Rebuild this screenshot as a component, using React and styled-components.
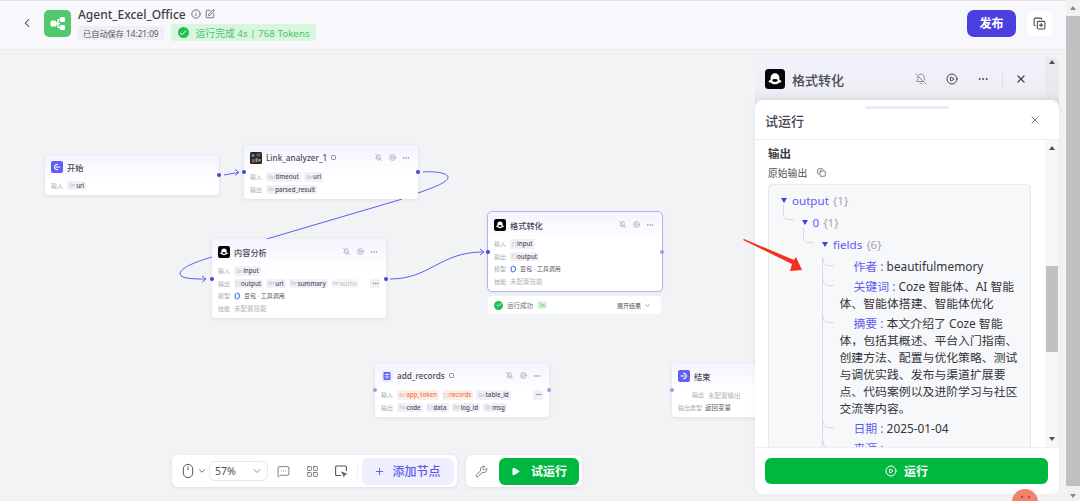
import React from "react";
import styled, { createGlobalStyle } from "styled-components";
import {
  ChevronLeft,
  ChevronDown,
  Info,
  SquarePen,
  CopyPlus,
  Copy,
  Mouse,
  MessageSquareMore,
  LayoutGrid,
  Wrench,
  Plus,
  Play,
  CirclePlay,
  Ellipsis,
  X,
  BellOff,
  Check
} from "lucide-react";

const FONT = `"Noto Sans", "Noto Sans CJK SC", sans-serif`;

const NODES = [
  {
    id: "start",
    x: 45,
    y: 105,
    icon: "start",
    title: "开始",
    plain: true,
    compact: true,
    rows: [{ label: "输入", tags: [{ type: "Str", name: "url" }] }],
    ports: [{ side: "right", top: 20 }]
  },
  {
    id: "link",
    x: 244,
    y: 95,
    icon: "link",
    title: "Link_analyzer_1",
    badge: true,
    rows: [
      {
        label: "输入",
        tags: [
          { type: "Nu", name: "timeout" },
          { type: "Str", name: "url" }
        ]
      },
      { label: "输出", tags: [{ type: "Str", name: "parsed_result" }] }
    ],
    ports: [
      { side: "left", top: 27 },
      { side: "right", top: 27 }
    ]
  },
  {
    id: "analysis",
    x: 212,
    y: 189,
    icon: "bot",
    title: "内容分析",
    rows: [
      { label: "输入", tags: [{ type: "Str", name: "input" }] },
      {
        label: "输出",
        tags: [
          { type: "[ ]", name: "output" },
          { type: "Str", name: "url" },
          { type: "Str", name: "summary" },
          { type: "Str", name: "autho", tone: "faded" }
        ],
        more: true
      },
      { label: "模型", model: "豆包 · 工具调用" },
      { label: "技能", note: "未配置技能" }
    ],
    ports: [
      { side: "left", top: 40 },
      { side: "right", top: 40 }
    ]
  },
  {
    id: "format",
    x: 488,
    y: 162,
    icon: "bot",
    title: "格式转化",
    selected: true,
    rows: [
      { label: "输入", tags: [{ type: "[ ]", name: "input" }] },
      { label: "输出", tags: [{ type: "[ ]", name: "output" }] },
      { label: "模型", model: "豆包 · 工具调用" },
      { label: "技能", note: "未配置技能" }
    ],
    ports: [
      { side: "left", top: 40 },
      { side: "right", top: 40, dim: true }
    ]
  },
  {
    id: "records",
    x: 375,
    y: 313,
    icon: "table",
    title: "add_records",
    badge: true,
    rows: [
      {
        label: "输入",
        tags: [
          { type: "Str", name: "app_token", tone: "warn" },
          { type: "[ ]", name: "records", tone: "warn" },
          { type: "Str", name: "table_id" }
        ],
        more: true
      },
      {
        label: "输出",
        tags: [
          { type: "Nu", name: "code" },
          { type: "{ }", name: "data" },
          { type: "Str", name: "log_id" },
          { type: "Str", name: "msg" }
        ]
      }
    ],
    ports: [
      { side: "left", top: 27, dim: true },
      { side: "right", top: 27, dim: true }
    ]
  },
  {
    id: "end",
    x: 672,
    y: 313,
    icon: "end",
    title: "结束",
    plain: true,
    rows: [
      { label: "输出", note: "未配置输出", indent: true },
      { label: "输出类型", note: "返回变量", strong: true }
    ],
    ports: [{ side: "left", top: 27, dim: true }]
  }
];

const FIELDS = [
  { key: "作者", value: "beautifulmemory" },
  { key: "关键词", value: "Coze 智能体、AI 智能体、智能体搭建、智能体优化" },
  {
    key: "摘要",
    value:
      "本文介绍了 Coze 智能体，包括其概述、平台入门指南、创建方法、配置与优化策略、测试与调优实践、发布与渠道扩展要点、代码案例以及进阶学习与社区交流等内容。"
  },
  { key: "日期", value: "2025-01-04" },
  { key: "来源", value: "" }
];

function AppLogo() {
  return (
    <svg width="27" height="27" viewBox="0 0 27 27">
      <rect width="27" height="27" rx="5" fill="#4fc96c" />
      <path d="M11 13.5h5M14 9.5v8M14 9.5h3M14 17.5h3" stroke="#fff" strokeWidth="1.4" fill="none" />
      <rect x="6.5" y="10.5" width="6" height="6" rx="1.5" fill="#fff" />
      <rect x="16" y="7" width="5" height="5" rx="1.2" fill="#fff" />
      <rect x="16" y="15" width="5" height="5" rx="1.2" fill="#fff" />
    </svg>
  );
}

function NodeIcon({ kind, size = 12 }) {
  if (kind === "start") {
    return (
      <svg width={size} height={size} viewBox="0 0 12 12">
        <rect width="12" height="12" rx="2" fill="#5f5ff2" />
        <path d="M7 3.4A2.7 2.7 0 1 0 7 8.6" stroke="#fff" strokeWidth="1.1" fill="none" />
        <path d="M4.6 6h4.6" stroke="#fff" strokeWidth="1.1" />
      </svg>
    );
  }
  if (kind === "end") {
    return (
      <svg width={size} height={size} viewBox="0 0 12 12">
        <rect width="12" height="12" rx="2" fill="#5f5ff2" />
        <path d="M5 3.4A2.7 2.7 0 1 1 5 8.6" stroke="#fff" strokeWidth="1.1" fill="none" />
        <path d="M2.6 6h4.8" stroke="#fff" strokeWidth="1.1" />
      </svg>
    );
  }
  if (kind === "link") {
    return (
      <svg width={size} height={size} viewBox="0 0 12 12">
        <rect width="12" height="12" rx="1.5" fill="#23292b" />
        <rect x="1.5" y="2" width="3" height="3" fill="#4a8a72" />
        <rect x="6.5" y="1.5" width="4" height="3" fill="#56606a" />
        <rect x="2" y="7" width="2.5" height="3.5" fill="#c9503f" />
        <rect x="5.5" y="6" width="2" height="4" fill="#63b96f" />
        <rect x="8.5" y="7" width="2" height="2.5" fill="#c7a23e" />
      </svg>
    );
  }
  if (kind === "table") {
    return (
      <svg width={size} height={size} viewBox="0 0 12 12">
        <rect width="12" height="12" rx="2" fill="#eeeefb" />
        <rect x="2.5" y="2" width="7" height="8" rx="0.8" fill="#5f5ff2" />
        <path d="M3.5 4.5h5M3.5 7h5M6 3v6" stroke="#fff" strokeWidth="0.7" />
      </svg>
    );
  }
  return (
    <svg width={size} height={size} viewBox="0 0 20 20">
      <rect width="20" height="20" rx="3.5" fill="#060606" />
      <path d="M5.6 11V8.6a4.4 4.4 0 0 1 8.8 0V11c1.2.2 2 .8 2 1.5 0 .7-.9 1.1-2 1-1 1.1-2.5 1.8-4.4 1.8s-3.4-.7-4.4-1.8c-1.1.1-2-.3-2-1 0-.7.8-1.3 2-1.5z" fill="#fff" />
      <ellipse cx="10" cy="11.5" rx="2.8" ry="1.4" fill="#060606" />
    </svg>
  );
}

function DoubaoIcon() {
  return (
    <svg width="7" height="8" viewBox="0 0 7 8" fill="none">
      <path d="M3 1.2A2.8 2.8 0 1 1 1.6 6.500" stroke="#4f7cf2" strokeWidth="1.2" />
      <path d="M1.300 6.600V2" stroke="#4f7cf2" strokeWidth="1.2" />
      <path d="M1.300 2L3 1.200" stroke="#3fc6a8" strokeWidth="1.2" />
    </svg>
  );
}

function NoteIcon() {
  return (
    <svg width="14" height="14" viewBox="0 0 14 14" fill="none" stroke="#55565f" strokeWidth="1.1">
      <path d="M7 11.5H2.600a1 1 0 0 1-1-1V3a1 1 0 0 1 1-1h8.800a1 1 0 0 1 1 1v4" />
      <path d="M8.200 8.200l1.700 3.800.6-1.500 1.600-.6z" />
    </svg>
  );
}

function FlowNode({ node }) {
  return (
    <NodeCard $x={node.x} $y={node.y} $selected={node.selected}>
      <NodeHead $compact={node.compact}>
        <NodeIcon kind={node.icon} />
        <NodeTitle>{node.title}</NodeTitle>
        {node.badge && <TitleBadge />}
        {!node.plain && (
          <NodeActions>
            <BellOff size={7} />
            <CirclePlay size={7} />
            <Ellipsis size={8} />
          </NodeActions>
        )}
      </NodeHead>
      {node.rows.map(row => (
        <NodeRow key={row.label}>
          <RowLabel $indent={row.indent}>{row.label}</RowLabel>
          {row.tags &&
            row.tags.map(tag => (
              <Tag key={tag.name} $tone={tag.tone}>
                <TagType>{tag.type}</TagType>
                {tag.name}
              </Tag>
            ))}
          {row.model && (
            <ModelName>
              <DoubaoIcon />
              {row.model}
            </ModelName>
          )}
          {row.note && <RowNote $strong={row.strong}>{row.note}</RowNote>}
          {row.more && (
            <MoreTag>
              <Ellipsis size={7} />
            </MoreTag>
          )}
        </NodeRow>
      ))}
      {node.ports.map(port => (
        <Port key={port.side} $side={port.side} $top={port.top} $dim={port.dim} />
      ))}
    </NodeCard>
  );
}

function Wires() {
  return (
    <WireLayer viewBox="0 50 1066 451" fill="none" stroke="#5e5cf0" strokeWidth="1">
      <path d="M224 175L238 172.500" />
      <path d="M235 169.500L239 172.300L235 175.500" />
      <path d="M423 172C434 171 448 173 448 177C448 184 425 190 399 200L270 238C250 245 228 251 212 257C195 262 180 268 180 274C181 279 195 279 205 279" />
      <path d="M202 276L206 279L202 282" />
      <path d="M390 279C430 279 440 252 483 252" />
      <path d="M480 249L484 252L480 255" />
    </WireLayer>
  );
}

export default function App() {
  return (
    <Page>
      <GlobalStyle />
      <Main>
        <Header>
          <BackButton>
            <ChevronLeft size={14} strokeWidth={1.8} />
          </BackButton>
          <AppLogo />
          <TitleBlock>
            <TitleRow>
              <AppTitle>Agent_Excel_Office</AppTitle>
              <Info size={10} />
              <SquarePen size={10} />
            </TitleRow>
            <StatusRow>
              <SaveTag>已自动保存 14:21:09</SaveTag>
              <RunTag>
                <GreenCheck $size={11}>
                  <Check size={8} strokeWidth={3} />
                </GreenCheck>
                运行完成 4s | 768 Tokens
              </RunTag>
            </StatusRow>
          </TitleBlock>
          <HeaderRight>
            <PublishButton>发布</PublishButton>
            <IconTile>
              <CopyPlus size={13} />
            </IconTile>
          </HeaderRight>
        </Header>

        <Canvas>
          <Wires />
          {NODES.map(node => (
            <FlowNode key={node.id} node={node} />
          ))}

          <RunResult>
            <GreenCheck $size={9}>
              <Check size={6} strokeWidth={3.5} />
            </GreenCheck>
            <span>运行成功</span>
            <TimeTag>3s</TimeTag>
            <ExpandLink>
              展开结果 <ChevronDown size={7} />
            </ExpandLink>
          </RunResult>

          <ToolDock>
            <ToolBar>
              <MouseGroup>
                <Mouse size={16} strokeWidth={1.4} />
                <ChevronDown size={10} />
              </MouseGroup>
              <ZoomSelect>
                57%
                <ChevronDown size={12} strokeWidth={1.2} />
              </ZoomSelect>
              <ToolIcon>
                <MessageSquareMore size={13} strokeWidth={1.3} />
              </ToolIcon>
              <ToolIcon>
                <LayoutGrid size={13} strokeWidth={1.3} />
              </ToolIcon>
              <ToolIcon>
                <NoteIcon />
              </ToolIcon>
              <ToolDivider />
              <AddNode>
                <Plus size={11} />
                添加节点
              </AddNode>
            </ToolBar>
            <ToolBar $run>
              <ToolIcon>
                <Wrench size={13} strokeWidth={1.3} />
              </ToolIcon>
              <TryRun>
                <Play size={9} fill="#fff" />
                试运行
              </TryRun>
            </ToolBar>
          </ToolDock>

          <BackPanel>
            <NodeIcon kind="bot" size={20} />
            <BackTitle>格式转化</BackTitle>
            <BackActions>
              <BellOff size={12} color="#8b8c96" />
              <CirclePlay size={12} />
              <Ellipsis size={12} />
              <BackDivider />
              <X size={12} strokeWidth={2.4} />
            </BackActions>
            <BackScroll>
              <ScrollArrow $up />
            </BackScroll>
          </BackPanel>

          <TestPanel>
            <Handle />
            <TestHead>
              试运行
              <X size={12} strokeWidth={1.5} />
            </TestHead>
            <TestBody>
              <ResultScroll>
                <SectionTitle>输出</SectionTitle>
                <RawLabel>
                  原始输出
                  <Copy size={9} />
                </RawLabel>
                <JsonBox>
                  <TreeRow $level={0}>
                    <Caret />
                    output <Count>{"{1}"}</Count>
                  </TreeRow>
                  <TreeRow $level={1} $elbow>
                    <Caret />0 <Count>{"{1}"}</Count>
                  </TreeRow>
                  <TreeRow $level={2} $elbow>
                    <Caret />
                    fields <Count>{"{6}"}</Count>
                  </TreeRow>
                  <FieldList>
                    {FIELDS.map(field => (
                      <Field key={field.key}>
                        <FieldKey>{field.key} : </FieldKey>
                        {field.value}
                      </Field>
                    ))}
                  </FieldList>
                </JsonBox>
              </ResultScroll>
              <InnerScroll>
                <ScrollArrow $up />
                <InnerThumb />
                <ScrollArrow />
              </InnerScroll>
            </TestBody>
            <TestFoot>
              <RunButton>
                <CirclePlay size={12} />
                运行
              </RunButton>
            </TestFoot>
          </TestPanel>

          <Avatar>
            <AvatarEye />
            <AvatarEye />
          </Avatar>

          <PointerArrow viewBox="0 50 1066 451">
            <polygon points="743,240 744,239 794,260 796,257 802,270 790,271 792,264" fill="#f5301c" />
          </PointerArrow>
        </Canvas>
      </Main>
      <PageScroll>
        <ScrollArrow $up $page />
        <PageThumb />
        <ScrollArrow $page />
      </PageScroll>
    </Page>
  );
}

const GlobalStyle = createGlobalStyle`
  html, body {
    margin: 0;
    padding: 0;
    overflow: hidden;
    background: #f2f3f5;
    font-family: ${FONT};
  }
  * {
    box-sizing: border-box;
  }
`;

const Page = styled.div`
  display: flex;
  width: 1080px;
  height: 501px;
  overflow: hidden;
`;

const Main = styled.div`
  flex: 1;
  min-width: 0;
  display: flex;
  flex-direction: column;
`;

const Header = styled.header`
  flex: none;
  height: 50px;
  display: flex;
  align-items: center;
  padding: 0 14px 4px 20px;
  background: #f7f7fc;
  border-top: 1px solid #e3e3e6;
  border-bottom: 1px solid #ebecf0;
  color: #3f4049;
`;

const BackButton = styled.div`
  width: 24px;
  display: flex;
  color: #3f4049;
`;

const TitleBlock = styled.div`
  margin-left: 7px;
  display: flex;
  flex-direction: column;
  gap: 1px;
`;

const TitleRow = styled.div`
  display: flex;
  align-items: center;
  gap: 4px;
  height: 18px;
  color: #55565f;
`;

const AppTitle = styled.div`
  font-size: 12px;
  font-weight: 500;
  color: #3e3f48;
  margin-right: 1px;
`;

const StatusRow = styled.div`
  display: flex;
  align-items: center;
  gap: 7px;
`;

const SaveTag = styled.div`
  height: 14px;
  padding: 0 5px;
  display: flex;
  align-items: center;
  border-radius: 3px;
  background: #eeeff6;
  font-size: 8.2px;
  color: #55565f;
`;

const RunTag = styled.div`
  height: 17px;
  padding: 0 6px 0 7px;
  display: flex;
  align-items: center;
  gap: 7px;
  border-radius: 4px;
  background: #d8f5de;
  font-size: 9.8px;
  color: #4bc56a;
  white-space: nowrap;
`;

const GreenCheck = styled.span`
  flex: none;
  width: ${p => p.$size}px;
  height: ${p => p.$size}px;
  display: flex;
  align-items: center;
  justify-content: center;
  border-radius: 50%;
  background: #22bf55;
  color: #fff;
`;

const HeaderRight = styled.div`
  margin-left: auto;
  display: flex;
  align-items: center;
  gap: 11px;
`;

const PublishButton = styled.div`
  width: 49px;
  height: 27px;
  display: flex;
  align-items: center;
  justify-content: center;
  border-radius: 7px;
  background: #4a40e2;
  color: #fff;
  font-size: 12px;
  font-weight: 700;
`;

const IconTile = styled.div`
  width: 25px;
  height: 25px;
  display: flex;
  align-items: center;
  justify-content: center;
  border-radius: 6px;
  background: #fff;
  color: #4a4b54;
`;

const Canvas = styled.main`
  position: relative;
  flex: 1;
  background-color: #f2f3f5;
  background-image: radial-gradient(#e6e7ec 0.6px, transparent 0.7px);
  background-size: 10px 10px;
`;

const WireLayer = styled.svg`
  position: absolute;
  inset: 0;
  width: 1066px;
  height: 451px;
`;

const NodeCard = styled.div`
  position: absolute;
  left: ${p => p.$x}px;
  top: ${p => p.$y}px;
  width: 174px;
  padding: 0 6px 3px;
  border-radius: 4px;
  background: linear-gradient(180deg, #f4f3ff 0, #fff 28px);
  box-shadow: 0 1px 4px rgba(40, 45, 80, 0.1);
  outline: ${p => (p.$selected ? "1px solid #b2b4f6" : "none")};
`;

const NodeHead = styled.div`
  height: ${p => (p.$compact ? "24px" : "25.5px")};
  display: flex;
  align-items: center;
  gap: 4px;
`;

const NodeTitle = styled.div`
  font-size: 8.2px;
  font-weight: 500;
  color: #4a4b54;
`;

const TitleBadge = styled.span`
  width: 5px;
  height: 5px;
  border: 0.8px solid #85868f;
  border-radius: 1.5px;
`;

const NodeActions = styled.div`
  margin-left: auto;
  display: flex;
  align-items: center;
  gap: 6.5px;
  padding-right: 2px;
  color: #8c8d96;
`;

const NodeRow = styled.div`
  height: 12.5px;
  display: flex;
  align-items: center;
  gap: 3px;
  white-space: nowrap;
  overflow: hidden;
`;

const RowLabel = styled.div`
  flex: none;
  min-width: 13px;
  margin-left: ${p => (p.$indent ? "14px" : "0")};
  font-size: 6px;
  color: #a9aab2;
`;

const Tag = styled.div`
  flex: none;
  height: 9.5px;
  padding: 0 2px;
  display: flex;
  align-items: center;
  gap: 0.5px;
  border-radius: 2px;
  font-size: 6.2px;
  font-weight: 500;
  background: ${p => (p.$tone === "warn" ? "#fdeee7" : p.$tone === "faded" ? "#f8f8fb" : "#f0f1f7")};
  color: ${p => (p.$tone === "warn" ? "#f0744a" : p.$tone === "faded" ? "#c4c5cc" : "#4c4d58")};
`;

const TagType = styled.span`
  font-size: 5px;
  font-weight: 400;
  color: #b9bac2;
`;

const ModelName = styled.div`
  display: flex;
  align-items: center;
  gap: 3px;
  font-size: 6px;
  color: #55565f;
`;

const RowNote = styled.div`
  font-size: 6.5px;
  color: ${p => (p.$strong ? "#55565f" : "#b4b5bc")};
`;

const MoreTag = styled.div`
  flex: none;
  margin-left: auto;
  width: 10px;
  height: 9.5px;
  display: flex;
  align-items: center;
  justify-content: center;
  border-radius: 2px;
  background: #f0f1f7;
  color: #6a6b75;
`;

const Port = styled.span`
  position: absolute;
  top: ${p => p.$top - 2}px;
  ${p => p.$side}: -2px;
  width: 4px;
  height: 4px;
  border-radius: 50%;
  background: ${p => (p.$dim ? "#9a9cf2" : "#4340ea")};
`;

const RunResult = styled.div`
  position: absolute;
  left: 488px;
  top: 246px;
  width: 173px;
  height: 18px;
  padding: 0 6px;
  display: flex;
  align-items: center;
  gap: 4px;
  border-radius: 4px;
  background: #fff;
  font-size: 6.5px;
  color: #6a6b75;
`;

const TimeTag = styled.span`
  padding: 0 2px;
  border-radius: 2px;
  background: #dcf6e2;
  color: #52bf6c;
  font-size: 5.5px;
`;

const ExpandLink = styled.span`
  margin-left: auto;
  margin-right: 4px;
  display: flex;
  align-items: center;
  gap: 3px;
  color: #55565f;
  font-size: 6px;
`;

const ToolDock = styled.div`
  position: absolute;
  left: 172px;
  top: 405px;
  display: flex;
  gap: 9px;
`;

const ToolBar = styled.div`
  height: 32px;
  width: ${p => (p.$run ? "116px" : "285px")};
  padding: ${p => (p.$run ? "0 3px 0 1px" : "0 2px 0 8px")};
  display: flex;
  align-items: center;
  border-radius: 6px;
  background: #fff;
  box-shadow: 0 1px 4px rgba(40, 45, 80, 0.1);
  color: #4a4b54;
`;

const MouseGroup = styled.div`
  width: 29px;
  display: flex;
  align-items: center;
  gap: 1px;
`;

const ZoomSelect = styled.div`
  width: 59px;
  height: 20px;
  margin-right: 1.5px;
  padding: 0 4px 0 5px;
  display: flex;
  align-items: center;
  justify-content: space-between;
  border: 1px solid #e6e7ec;
  border-radius: 6px;
  font-size: 10.5px;
  color: #50515a;
`;

const ToolIcon = styled.div`
  width: 28.5px;
  flex: none;
  display: flex;
  justify-content: center;
`;

const ToolDivider = styled.div`
  width: 1px;
  height: 14px;
  margin: 0 3.5px 0 2px;
  background: #eeeff2;
`;

const AddNode = styled.div`
  width: 92px;
  height: 27px;
  display: flex;
  align-items: center;
  justify-content: center;
  gap: 7px;
  border-radius: 6px;
  background: #eeeefe;
  color: #5b5bea;
  font-size: 12px;
  font-weight: 500;
`;

const TryRun = styled.div`
  width: 80px;
  height: 27px;
  margin-left: auto;
  display: flex;
  align-items: center;
  justify-content: center;
  gap: 11px;
  border-radius: 6px;
  background: #00b83f;
  color: #fff;
  font-size: 12px;
  font-weight: 700;
`;

const BackPanel = styled.section`
  position: absolute;
  left: 755px;
  top: 7px;
  width: 304px;
  height: 60px;
  padding: 0 0 16px 10px;
  display: flex;
  align-items: center;
  gap: 7px;
  border-radius: 8px 8px 0 0;
  background: linear-gradient(180deg, #f2f2fc 0, #eeeef5 55%, #d9d9e0 100%);
  color: #3f4049;
`;

const BackTitle = styled.div`
  font-size: 13px;
  font-weight: 500;
  color: #4a4b54;
`;

const BackActions = styled.div`
  margin-left: auto;
  margin-right: 32px;
  display: flex;
  align-items: center;
  gap: 19px;
`;

const BackDivider = styled.span`
  width: 1px;
  height: 16px;
  margin: 0 -6.5px;
  background: #dcdde6;
`;

const BackScroll = styled.div`
  position: absolute;
  right: 0;
  top: 0;
  bottom: 0;
  width: 14px;
  padding-top: 3px;
  border-radius: 0 8px 0 0;
  background: rgba(225, 225, 232, 0.5);
`;

const ScrollArrow = styled.span`
  display: block;
  flex: none;
  width: 0;
  height: 0;
  margin: 0 auto;
  border-left: 3.5px solid transparent;
  border-right: 3.5px solid transparent;
  ${p => (p.$up ? "border-bottom" : "border-top")}: 4px solid ${p => (p.$page ? "#8a8a8a" : "#505050")};
`;

const TestPanel = styled.section`
  position: absolute;
  left: 755px;
  top: 50px;
  width: 304px;
  height: 394px;
  display: flex;
  flex-direction: column;
  border-radius: 8px;
  background: #fff;
  box-shadow: 0 -2px 6px rgba(40, 45, 80, 0.06);
`;

const Handle = styled.span`
  position: absolute;
  left: 110px;
  top: 5.5px;
  width: 84px;
  height: 3px;
  border-radius: 2px;
  background: #ecedf3;
`;

const TestHead = styled.div`
  flex: none;
  height: 40px;
  padding: 1px 18px 0 10px;
  display: flex;
  align-items: center;
  justify-content: space-between;
  border-bottom: 1px solid #ecedf5;
  font-size: 13px;
  font-weight: 500;
  color: #45464f;
`;

const TestBody = styled.div`
  flex: 1;
  min-height: 0;
  display: flex;
`;

const ResultScroll = styled.div`
  flex: 1;
  min-width: 0;
  overflow: hidden;
  padding: 3px 14px 0 13px;
`;

const SectionTitle = styled.div`
  height: 19px;
  display: flex;
  align-items: center;
  font-size: 11.5px;
  font-weight: 700;
  color: #3a3b44;
`;

const RawLabel = styled.div`
  height: 21px;
  display: flex;
  align-items: center;
  gap: 10px;
  font-size: 9.8px;
  color: #4f505a;
`;

const JsonBox = styled.div`
  width: 263px;
  min-height: 300px;
  margin-top: 1px;
  padding: 4px 0 0 12px;
  border: 1px solid #e8e9ee;
  border-radius: 4px;
  background-color: #f7f8fa;
`;

const TreeRow = styled.div`
  position: relative;
  height: 22.3px;
  margin-left: ${p => p.$level * 20.5}px;
  display: flex;
  align-items: center;
  gap: 5px;
  font-size: 11.6px;
  color: #5e5cf0;

  ${p =>
    p.$elbow &&
    `&::before {
      content: "";
      position: absolute;
      left: -19px;
      top: -6px;
      width: 10px;
      height: 14px;
      border-left: 1px solid #d9dae2;
      border-bottom: 1px solid #d9dae2;
      border-bottom-left-radius: 5px;
    }`}
`;

const Caret = styled.span`
  width: 0;
  height: 0;
  border-left: 3.5px solid transparent;
  border-right: 3.5px solid transparent;
  border-top: 5px solid #3f3de0;
`;

const Count = styled.span`
  color: #a6a7af;
  margin-left: -1px;
`;

const FieldList = styled.div`
  margin-left: 41px;
  padding: 2px 10px 0 16.5px;
  border-left: 1px solid #dcdde4;
`;

const Field = styled.div`
  position: relative;
  min-height: 17px;
  margin-bottom: 3px;
  text-indent: 14px;
  line-height: 17px;
  font-size: 11.87px;
  color: #33343c;

  &::before {
    content: "";
    position: absolute;
    left: -17px;
    top: 1px;
    width: 10px;
    height: 6px;
    border-left: 1px solid #dcdde4;
    border-bottom: 1px solid #dcdde4;
    border-bottom-left-radius: 5px;
  }
`;

const FieldKey = styled.span`
  color: #5e5cf0;
`;

const InnerScroll = styled.div`
  flex: none;
  width: 14px;
  padding: 6px 0;
  display: flex;
  flex-direction: column;
  background: #f7f7f8;
`;

const InnerThumb = styled.div`
  width: 12px;
  height: 86px;
  margin: 116px auto auto;
  background: #c1c1c1;
`;

const TestFoot = styled.div`
  flex: none;
  height: 47px;
  padding: 10px 11px 0 10px;
  border-top: 1px solid #eeeff2;
`;

const RunButton = styled.div`
  height: 26px;
  display: flex;
  align-items: center;
  justify-content: center;
  gap: 7px;
  border-radius: 6px;
  background: #00b83f;
  color: #fff;
  font-size: 12px;
  font-weight: 700;
`;

const Avatar = styled.div`
  position: absolute;
  left: 1012px;
  top: 439px;
  width: 26px;
  height: 26px;
  padding-top: 7px;
  display: flex;
  justify-content: center;
  gap: 5px;
  border-radius: 50%;
  background: #f3816b;
`;

const AvatarEye = styled.span`
  width: 2px;
  height: 2px;
  border-radius: 50%;
  background: #8c3a2c;
`;

const PointerArrow = styled.svg`
  position: absolute;
  inset: 0;
  width: 1066px;
  height: 451px;
  pointer-events: none;
`;

const PageScroll = styled.aside`
  flex: none;
  width: 14px;
  padding: 6px 0 3px;
  display: flex;
  flex-direction: column;
  align-items: center;
  background: #f1f1f1;
`;

const PageThumb = styled.div`
  flex: 1;
  width: 100%;
  margin: 6px 0 8px;
  background: #c1c1c1;
`;
